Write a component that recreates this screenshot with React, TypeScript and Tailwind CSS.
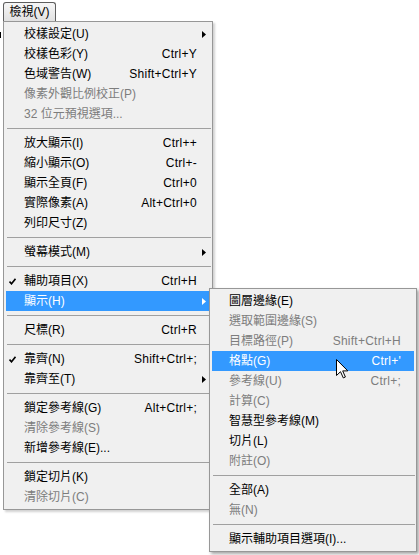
import React from "react";

type Item =
  | { sep: true }
  | {
      sep?: false;
      label: string;
      shortcut?: string;
      disabled?: boolean;
      checked?: boolean;
      sub?: boolean;
      active?: boolean;
    };

const mainItems: Item[] = [
  { label: "校樣設定(U)", sub: true },
  { label: "校樣色彩(Y)", shortcut: "Ctrl+Y" },
  { label: "色域警告(W)", shortcut: "Shift+Ctrl+Y" },
  { label: "像素外觀比例校正(P)", disabled: true },
  { label: "32 位元預視選項...", disabled: true },
  { sep: true },
  { label: "放大顯示(I)", shortcut: "Ctrl++" },
  { label: "縮小顯示(O)", shortcut: "Ctrl+-" },
  { label: "顯示全頁(F)", shortcut: "Ctrl+0" },
  { label: "實際像素(A)", shortcut: "Alt+Ctrl+0" },
  { label: "列印尺寸(Z)" },
  { sep: true },
  { label: "螢幕模式(M)", sub: true },
  { sep: true },
  { label: "輔助項目(X)", shortcut: "Ctrl+H", checked: true },
  { label: "顯示(H)", sub: true, active: true },
  { sep: true },
  { label: "尺標(R)", shortcut: "Ctrl+R" },
  { sep: true },
  { label: "靠齊(N)", shortcut: "Shift+Ctrl+;", checked: true },
  { label: "靠齊至(T)", sub: true },
  { sep: true },
  { label: "鎖定參考線(G)", shortcut: "Alt+Ctrl+;" },
  { label: "清除參考線(S)", disabled: true },
  { label: "新增參考線(E)..." },
  { sep: true },
  { label: "鎖定切片(K)" },
  { label: "清除切片(C)", disabled: true },
];

const subItems: Item[] = [
  { label: "圖層邊緣(E)" },
  { label: "選取範圍邊緣(S)", disabled: true },
  { label: "目標路徑(P)", shortcut: "Shift+Ctrl+H", disabled: true },
  { label: "格點(G)", shortcut: "Ctrl+'", active: true },
  { label: "參考線(U)", shortcut: "Ctrl+;", disabled: true },
  { label: "計算(C)", disabled: true },
  { label: "智慧型參考線(M)" },
  { label: "切片(L)" },
  { label: "附註(O)", disabled: true },
  { sep: true },
  { label: "全部(A)" },
  { label: "無(N)", disabled: true },
  { sep: true },
  { label: "顯示輔助項目選項(I)..." },
];

const Check = ({ color }: { color: string }) => (
  <svg width="7" height="7" viewBox="0 0 7 7">
    <path d="M0.5 3.5 L2.5 5.8 L6.5 0.8" fill="none" stroke={color} strokeWidth="1.6" />
  </svg>
);

const Arrow = ({ color }: { color: string }) => (
  <svg width="4" height="7" viewBox="0 0 4 7">
    <path d="M0 0 L4 3.5 L0 7 Z" fill={color} />
  </svg>
);

const MenuList = ({ items, lead }: { items: Item[]; lead: string }) => (
  <>
    {items.map((it, i) => {
      if (it.sep) {
        return (
          <div key={i} className="flex h-[9px] items-center pl-[3px] pr-[1px]">
            <div className="h-px w-full bg-[#a0a0a0]" />
          </div>
        );
      }
      const color = it.active ? "#ffffff" : it.disabled ? "#7d7d7d" : "#000000";
      return (
        <div
          key={i}
          className={`mx-[2px] flex h-[20px] items-center ${it.active ? "bg-[#3399ff]" : ""}`}
          style={{ color }}
        >
          <div className={`flex ${lead} items-center pl-[3px]`}>
            {it.checked && <Check color={color} />}
          </div>
          <span className="flex-1 whitespace-nowrap">{it.label}</span>
          {it.shortcut && (
            <span className="whitespace-nowrap tracking-[0.25px]">{it.shortcut}</span>
          )}
          <div className="flex w-[13px] justify-end pr-[4px]">
            {it.sub && <Arrow color={color} />}
          </div>
        </div>
      );
    })}
  </>
);

export default function App() {
  return (
    <div
      className="relative h-[555px] w-[419px] overflow-hidden bg-white text-[12px] leading-none text-black"
      style={{ fontFamily: '"Liberation Sans", "Noto Sans CJK TC", sans-serif' }}
    >
      <div className="absolute left-0 top-[32px] h-[6px] w-px bg-black" />

      <div className="pl-[3px] pt-[2px]">
        <div className="flex h-[19px] w-[53px] items-center justify-center rounded-t-[3px] border border-b-0 border-[#5e5e5e] bg-gradient-to-b from-[#f6f6f6] to-[#e1e1e1]">
          檢視(V)
        </div>
      </div>

      <div className="ml-[3px] w-[210px] border border-[#979797] bg-[#f0f0f0] py-[2px] shadow-[2px_2px_2px_rgba(0,0,0,0.18)]">
        <MenuList items={mainItems} lead="w-[18px]" />
      </div>

      <div className="absolute left-[209px] top-[288px] w-[208px] border border-[#979797] bg-[#f0f0f0] py-[2px] shadow-[2px_2px_3px_rgba(0,0,0,0.35)]">
        <MenuList items={subItems} lead="w-[17px]" />
      </div>

      <svg className="absolute left-[336px] top-[359px]" width="13" height="20" viewBox="0 0 13 20">
        <path
          d="M0.5 0.5 L0.5 16.5 L4.5 12.7 L7.3 18.9 L9.4 18 L6.7 11.9 L11.8 11.9 Z"
          fill="#ffffff"
          stroke="#000000"
          strokeWidth="1"
          strokeLinejoin="miter"
        />
      </svg>
    </div>
  );
}
